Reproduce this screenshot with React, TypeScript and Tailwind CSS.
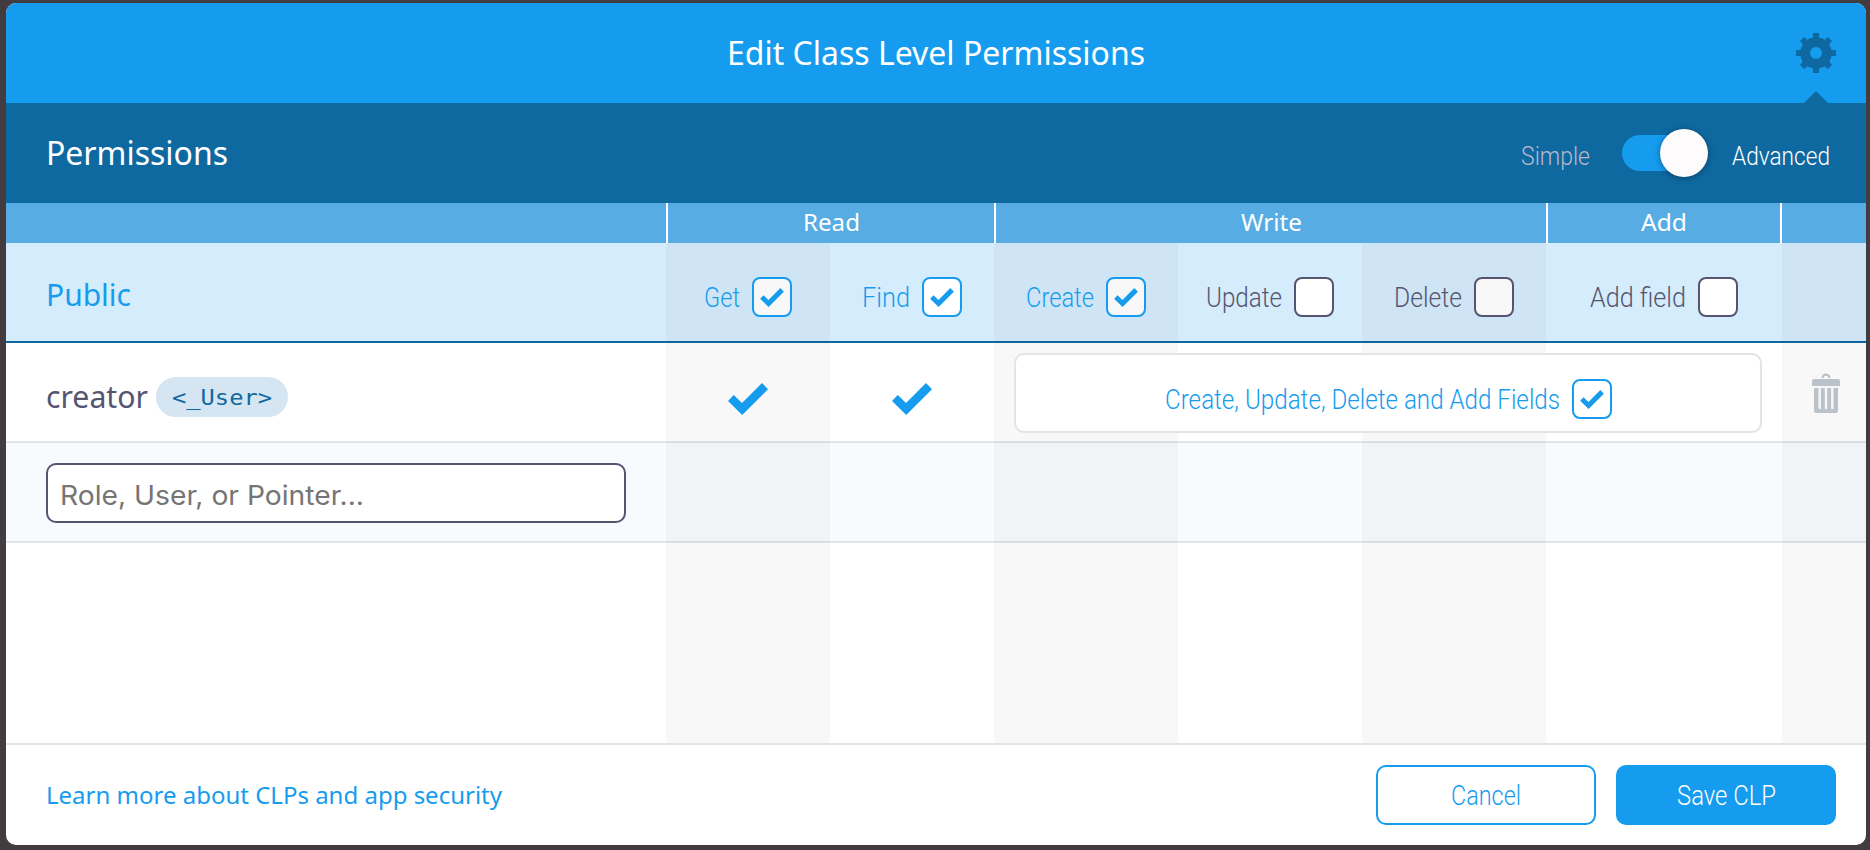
import { useLayoutEffect, useRef, useState } from "react";
import type { ReactNode } from "react";

const NARROW = "font-[Roboto,'Liberation_Sans',sans-serif] font-light";
const COLUMNS = "grid grid-cols-[660px_164px_164px_184px_184px_184px_236px_84px]";

/* A single line of text squeezed or stretched to an exact width. */
function Fit({ width, className = "", children }: { width: number; className?: string; children: ReactNode }) {
  const ref = useRef<HTMLSpanElement>(null);
  const [scale, setScale] = useState(1);
  useLayoutEffect(() => {
    const el = ref.current;
    if (el) setScale(width / el.getBoundingClientRect().width);
  }, [width]);
  return (
    <span className={"block shrink-0 whitespace-nowrap " + className} style={{ width }}>
      <span ref={ref} className="inline-block origin-left" style={{ transform: `scaleX(${scale})` }}>
        {children}
      </span>
    </span>
  );
}

function Check({ className }: { className: string }) {
  return (
    <svg viewBox="0 0 40 32" className={className} fill="currentColor">
      <path d="M0 18 5.8 12 14 20 34 0 40 6.2 14.2 32Z" />
    </svg>
  );
}

function Gear() {
  return (
    <svg viewBox="0 0 40 40" className="size-10" fill="#0e69a1">
      <path
        fillRule="evenodd"
        d="M17 0h6v4.6a15.500 15.500 0 0 1 5.500 2.200L32 4l4 4-2.800 3.500A15.500 15.500 0 0 1 35.400 17H40v6h-4.600a15.500 15.500 0 0 1-2.200 5.500L36 32l-4 4-3.500-2.800a15.500 15.500 0 0 1-5.500 2.200V40h-6v-4.600a15.500 15.500 0 0 1-5.500-2.200L8 36l-4-4 2.800-3.500A15.500 15.500 0 0 1 4.600 23H0v-6h4.600a15.500 15.500 0 0 1 2.200-5.500L4 8l4-4 3.500 2.800A15.500 15.500 0 0 1 17 4.600ZM20 14a6 6 0 1 0 0 12 6 6 0 0 0 0-12Z"
      />
    </svg>
  );
}

function Trash() {
  return (
    <svg viewBox="0 0 28 40" className="h-10 w-7" fill="#bcc2c9">
      <path d="M9.500 5a4.500 4.500 0 0 1 9 0h-2.200a2.300 2.300 0 0 0-4.600 0Z" />
      <path d="M2 6h24a2 2 0 0 1 2 2v5H0V8a2 2 0 0 1 2-2Z" />
      <path
        fillRule="evenodd"
        d="M2 15h24v23a2 2 0 0 1-2 2H4a2 2 0 0 1-2-2ZM6.500 15v20a1.200 1.200 0 0 0 2.400 0V15ZM12.800 15v20a1.200 1.200 0 0 0 2.400 0V15ZM19.100 15v20a1.200 1.200 0 0 0 2.400 0V15Z"
      />
    </svg>
  );
}

function Option({ label, width, checked, shaded }: { label: string; width: number; checked?: boolean; shaded?: boolean }) {
  return (
    <div className={"flex items-center justify-center gap-3 " + (checked ? "text-[#169cee]" : "text-[#555572]")}>
      <Fit width={width} className={NARROW + " pt-0.5 text-[28px] leading-[38px]"}>
        {label}
      </Fit>
      <span
        className={
          "flex size-10 items-center justify-center rounded-lg border-2 border-current " +
          (shaded ? "bg-[#f8f8f8]" : "bg-white")
        }
      >
        {checked && <Check className="h-[19px] w-6" />}
      </span>
    </div>
  );
}

const SHADE = "bg-black/[0.028]";

export default function App() {
  return (
    <div className="h-[850px] w-[1870px] bg-[#423c40] pt-[3px] pl-[6px] font-['Noto_Sans',sans-serif] text-white">
      <div className="flex h-[842px] w-[1860px] flex-col overflow-hidden rounded-[10px] bg-white">
        <header className="relative flex h-[100px] shrink-0 items-center justify-center bg-[#169cee]">
          <Fit width={418} className="text-[32px] leading-[44px]">
            Edit Class Level Permissions
          </Fit>
          <button className="absolute top-[30px] right-[30px]">
            <Gear />
          </button>
          <svg viewBox="0 0 24 12" className="absolute right-[38px] bottom-0 h-3 w-6" fill="#0e69a1">
            <path d="M12 0 24 12H0Z" />
          </svg>
        </header>

        <section className="flex h-[100px] shrink-0 items-center bg-[#0e69a1] pr-9 pl-10">
          <Fit width={182} className="text-[32px] leading-[44px]">
            Permissions
          </Fit>
          <div className={"ml-auto flex items-center text-[26px] leading-9 " + NARROW}>
            <Fit width={69} className="pt-1.5 text-[#bab8c8]">
              Simple
            </Fit>
            <div className="mx-6 ml-8 flex h-12 w-[86px] items-center">
              <span className="h-9 w-[70px] rounded-full bg-[#169cee]" />
              <span className="-ml-8 size-12 shrink-0 rounded-full bg-[#fdfbfc] shadow-[0_1px_6px_rgba(0,0,0,0.4)]" />
            </div>
            <Fit width={98} className="pt-1.5">
              Advanced
            </Fit>
          </div>
        </section>

        <div className="grid h-10 shrink-0 grid-cols-[660px_328px_552px_236px_84px] bg-[#57ade3] text-2xl leading-[38px]">
          <span />
          <span className="flex justify-center border-l-2 border-white">
            <Fit width={57}>Read</Fit>
          </span>
          <span className="flex justify-center border-l-2 border-white">
            <Fit width={61}>Write</Fit>
          </span>
          <span className="flex justify-center border-x-2 border-white">
            <Fit width={46}>Add</Fit>
          </span>
          <span />
        </div>

        <div className={COLUMNS + " h-[100px] shrink-0 bg-[#d5ecfc] shadow-[inset_0_-2px_#0e69a1]"}>
          <div className="flex items-center pt-[3px] pl-10 text-[#169cee]">
            <Fit width={85} className="text-[30px] leading-10">
              Public
            </Fit>
          </div>
          <div className={SHADE + " grid pt-2"}>
            <Option label="Get" width={36} checked shaded />
          </div>
          <div className="grid pt-2">
            <Option label="Find" width={48} checked />
          </div>
          <div className={SHADE + " grid pt-2"}>
            <Option label="Create" width={68} checked shaded />
          </div>
          <div className="grid pt-2">
            <Option label="Update" width={76} />
          </div>
          <div className={SHADE + " grid pt-2"}>
            <Option label="Delete" width={68} shaded />
          </div>
          <div className="grid pt-2">
            <Option label="Add field" width={96} />
          </div>
          <div className={SHADE} />
        </div>

        <div className={COLUMNS + " h-[100px] shrink-0 bg-white text-[#169cee] shadow-[inset_0_-2px_#e3e3ea]"}>
          <div className="flex items-center gap-2 pt-2 pl-10">
            <Fit width={102} className="text-[30px] leading-10 text-[#555572]">
              creator
            </Fit>
            <span className="flex h-10 w-[132px] items-center justify-center rounded-full bg-[#d5e5f2] font-['DejaVu_Sans_Mono',monospace] text-[22px] text-[#0e69a1]">
              <Fit width={100}>&lt;_User&gt;</Fit>
            </span>
          </div>
          <div className={SHADE + " flex items-center justify-center pt-3"}>
            <Check className="h-8 w-10" />
          </div>
          <div className="flex items-center justify-center pt-3">
            <Check className="h-8 w-10" />
          </div>
          <div className="col-span-4 grid grid-cols-[184px_184px_184px_236px]">
            <div className={SHADE + " col-start-1 row-start-1 h-[100px]"} />
            <div className={SHADE + " col-start-3 row-start-1 h-[100px]"} />
            <div className="relative col-span-4 col-start-1 row-start-1 mx-5 mt-[10px] grid h-20 rounded-[10px] border-2 border-[#e3e3ea] bg-white pt-3">
              <Option label="Create, Update, Delete and Add Fields" width={395} checked />
            </div>
          </div>
          <div className={SHADE + " flex justify-center pt-[30px] pl-1"}>
            <Trash />
          </div>
        </div>

        <div className={COLUMNS + " h-[100px] shrink-0 bg-[#f7fbfe] shadow-[inset_0_-2px_#e3e3ea]"}>
          <div className="pt-5 pl-10">
            <div className="flex h-[60px] w-[580px] items-center rounded-[10px] border-2 border-[#555572] bg-white pl-3 font-[Inter,sans-serif] text-[27px] text-[#757575]">
              <Fit width={304} className="pt-1.5 leading-10">
                Role, User, or Pointer...
              </Fit>
            </div>
          </div>
          <div className={SHADE} />
          <div />
          <div className={SHADE} />
          <div />
          <div className={SHADE} />
          <div />
          <div className={SHADE} />
        </div>

        <div className={COLUMNS + " h-[200px] shrink-0"}>
          <div />
          <div className={SHADE} />
          <div />
          <div className={SHADE} />
          <div />
          <div className={SHADE} />
          <div />
          <div className={SHADE} />
        </div>

        <footer className="flex h-[102px] shrink-0 items-center gap-5 border-t-2 border-[#e3e3ea] pr-[30px] pl-10 text-[#169cee]">
          <Fit width={456} className="text-2xl leading-10">
            Learn more about CLPs and app security
          </Fit>
          <button className={NARROW + " ml-auto flex h-[60px] w-[220px] items-center justify-center rounded-[10px] border-2 border-[#169cee] pt-0.5 text-[28px]"}>
            <Fit width={70}>Cancel</Fit>
          </button>
          <button className={NARROW + " flex h-[60px] w-[220px] items-center justify-center rounded-[10px] bg-[#169cee] pt-0.5 text-[28px] text-white"}>
            <Fit width={99}>Save CLP</Fit>
          </button>
        </footer>
      </div>
    </div>
  );
}
